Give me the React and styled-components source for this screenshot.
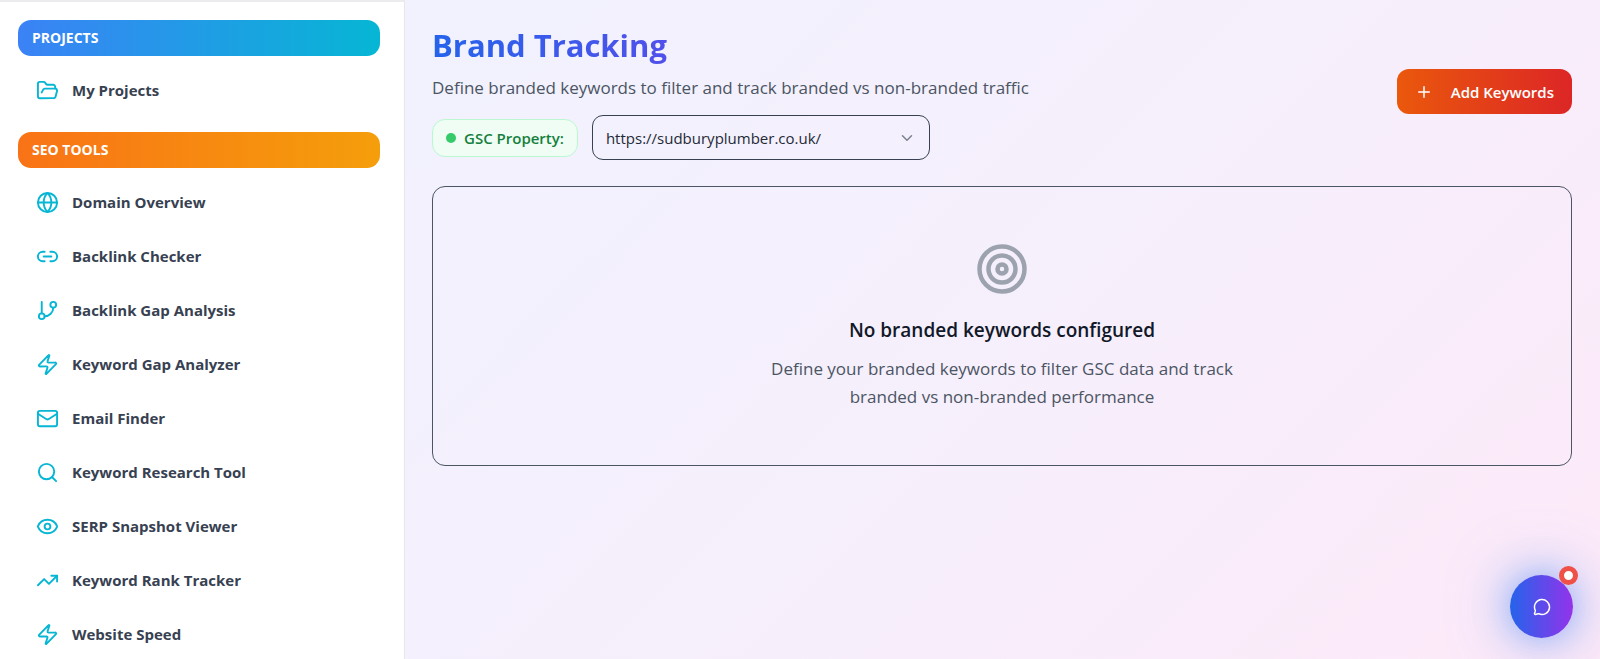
import React, { useState } from 'react';
import styled, { createGlobalStyle } from 'styled-components';
import {
  ChevronDown,
  Eye,
  FolderOpen,
  GitBranch,
  Globe,
  Link2,
  Mail,
  MessageCircle,
  Plus,
  Search,
  Target,
  TrendingUp,
  Zap,
} from 'lucide-react';

const GlobalStyle = createGlobalStyle`
  *, *::before, *::after {
    box-sizing: border-box;
  }
  body {
    margin: 0;
    font-family: 'Open Sans', 'Noto Sans', sans-serif;
    color: #111827;
  }
  h1, h2, h3, p, ul {
    margin: 0;
    padding: 0;
  }
  button, select {
    font-family: inherit;
  }
`;

const LayoutStyles = styled.div`
  display: grid;
  grid-template-columns: 405px minmax(0, 1fr);
  height: 100vh;
  overflow: hidden;
`;

const SidebarStyles = styled.nav`
  background: #fff;
  border-top: 2px solid #ececee;
  border-right: 1px solid #e5e7eb;
  padding: 18px 24px 0 18px;
  overflow: hidden;
`;

const SectionTitle = styled.h3`
  height: 36px;
  padding: 0 14px;
  border-radius: 13px;
  background: linear-gradient(to right, ${({ $from }) => $from}, ${({ $to }) => $to});
  color: #fff;
  font-size: 14px;
  line-height: 36px;
  font-weight: 700;
  text-transform: uppercase;
`;

const NavList = styled.ul`
  list-style: none;
  padding: 9px 0 17px;
`;

const NavLink = styled.a`
  display: flex;
  align-items: center;
  gap: 13px;
  height: 50px;
  padding-left: 18px;
  margin-bottom: ${({ $last }) => ($last ? 0 : '4px')};
  color: #374151;
  font-size: 15px;
  font-weight: 700;
  text-decoration: none;
  svg {
    color: #06b6d4;
  }
`;

const MainStyles = styled.main`
  background: linear-gradient(135deg, #f1f2fe, #f6effc 50%, #fde9f8);
  padding: 23px 28px 24px 27px;
`;

const PageHeader = styled.header`
  display: flex;
  align-items: center;
  justify-content: space-between;
  margin-bottom: 26px;
`;

const Title = styled.h1`
  background: linear-gradient(to right, #2563eb, #9333ea);
  background-clip: text;
  color: transparent;
  font-size: 31px;
  line-height: 45px;
  font-weight: 700;
`;

const Subtitle = styled.p`
  margin: 6px 0 13px;
  color: #4b5563;
  font-size: 17px;
  line-height: 28px;
`;

const PropertyRow = styled.div`
  display: flex;
  align-items: center;
  gap: 14px;
`;

const PropertyLabel = styled.label`
  display: flex;
  align-items: center;
  gap: 8px;
  height: 38px;
  padding: 0 13px;
  border: 1px solid #bbf7d0;
  border-radius: 13px;
  background: #f0fdf4;
  color: #15803d;
  font-size: 15px;
  font-weight: 600;
  &::before {
    content: '';
    width: 10px;
    height: 10px;
    border-radius: 50%;
    background: #35cb6b;
  }
`;

const SelectBox = styled.div`
  position: relative;
  width: 338px;
  select {
    appearance: none;
    width: 100%;
    height: 45px;
    padding: 0 44px 0 13px;
    border: 1px solid #374151;
    border-radius: 11px;
    background: transparent;
    color: #1f2937;
    font-size: 15px;
  }
  svg {
    position: absolute;
    top: 14px;
    right: 14px;
    color: #7b8190;
    pointer-events: none;
  }
`;

const AddButton = styled.button`
  display: flex;
  align-items: center;
  gap: 18px;
  height: 45px;
  padding: 0 18px;
  border: 0;
  border-radius: 12px;
  background: linear-gradient(to right, #ea580c, #dc2626);
  color: #fff;
  font-size: 15px;
  font-weight: 600;
`;

const EmptyCard = styled.section`
  display: flex;
  flex-direction: column;
  align-items: center;
  padding: 55px 24px 54px;
  border: 1px solid #4b5563;
  border-radius: 13px;
  text-align: center;
  svg {
    color: #9ca3af;
  }
  h2 {
    margin: 18px 0 9px;
    font-size: 19px;
    line-height: 32px;
    font-weight: 600;
  }
  p {
    max-width: 504px;
    color: #4b5563;
    font-size: 17px;
    line-height: 28px;
  }
`;

const ChatButton = styled.button`
  position: fixed;
  right: 27px;
  bottom: 21px;
  display: grid;
  place-items: center;
  width: 63px;
  height: 63px;
  padding: 0;
  border: 0;
  border-radius: 50%;
  background: linear-gradient(to right, #2563eb, #9333ea);
  box-shadow: 0 0 34px rgba(59, 130, 246, 0.5), 0 0 68px rgba(59, 130, 246, 0.4);
  color: #fff;
  &::after {
    content: '';
    position: absolute;
    top: -9px;
    right: -5px;
    width: 19px;
    height: 19px;
    border: 5px solid #ef5048;
    border-radius: 50%;
    background: #fff;
  }
`;

const sections = [
  {
    title: 'Projects',
    from: '#3b82f6',
    to: '#06b6d4',
    links: [{ label: 'My Projects', icon: FolderOpen }],
  },
  {
    title: 'SEO Tools',
    from: '#f97316',
    to: '#f59e0b',
    links: [
      { label: 'Domain Overview', icon: Globe },
      { label: 'Backlink Checker', icon: Link2 },
      { label: 'Backlink Gap Analysis', icon: GitBranch },
      { label: 'Keyword Gap Analyzer', icon: Zap },
      { label: 'Email Finder', icon: Mail },
      { label: 'Keyword Research Tool', icon: Search },
      { label: 'SERP Snapshot Viewer', icon: Eye },
      { label: 'Keyword Rank Tracker', icon: TrendingUp },
      { label: 'Website Speed', icon: Zap },
    ],
  },
];

function Sidebar() {
  return (
    <SidebarStyles>
      {sections.map(({ title, from, to, links }) => (
        <div key={title}>
          <SectionTitle $from={from} $to={to}>
            {title}
          </SectionTitle>
          <NavList>
            {links.map(({ label, icon: Icon }, i) => (
              <li key={label}>
                <NavLink href="#" $last={i === links.length - 1}>
                  <Icon size={23} />
                  {label}
                </NavLink>
              </li>
            ))}
          </NavList>
        </div>
      ))}
    </SidebarStyles>
  );
}

function PropertyPicker({ property, setProperty }) {
  return (
    <PropertyRow>
      <PropertyLabel htmlFor="property">GSC Property:</PropertyLabel>
      <SelectBox>
        <select
          id="property"
          value={property}
          onChange={(e) => setProperty(e.target.value)}
        >
          <option>https://sudburyplumber.co.uk/</option>
        </select>
        <ChevronDown size={18} />
      </SelectBox>
    </PropertyRow>
  );
}

export default function App() {
  const [property, setProperty] = useState('https://sudburyplumber.co.uk/');
  return (
    <LayoutStyles>
      <GlobalStyle />
      <Sidebar />
      <MainStyles>
        <PageHeader>
          <div>
            <Title>Brand Tracking</Title>
            <Subtitle>
              Define branded keywords to filter and track branded vs non-branded
              traffic
            </Subtitle>
            <PropertyPicker property={property} setProperty={setProperty} />
          </div>
          <AddButton type="button">
            <Plus size={18} />
            Add Keywords
          </AddButton>
        </PageHeader>
        <EmptyCard>
          <Target size={54} />
          <h2>No branded keywords configured</h2>
          <p>
            Define your branded keywords to filter GSC data and track branded vs
            non-branded performance
          </p>
        </EmptyCard>
      </MainStyles>
      <ChatButton type="button" aria-label="Open chat">
        <MessageCircle size={18} />
      </ChatButton>
    </LayoutStyles>
  );
}
